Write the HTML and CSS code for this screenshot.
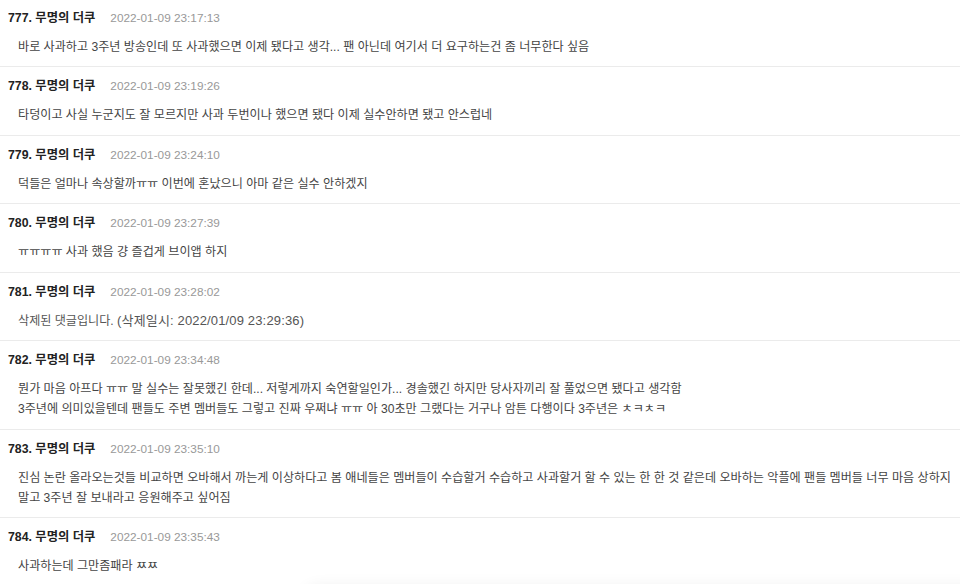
FILE: index.html
```html
<!DOCTYPE html>
<html lang="ko">
<head>
<meta charset="utf-8">
<link rel="stylesheet" href="styles.css">
</head>
<body>
<ul class="comments">
  <li class="comment">
    <div class="meta"><span class="author">777. 무명의 더쿠</span><span class="date">2022-01-09 23:17:13</span></div>
    <div class="text">바로 사과하고 3주년 방송인데 또 사과했으면 이제 됐다고 생각... 팬 아닌데 여기서 더 요구하는건 좀 너무한다 싶음</div>
  </li>
  <li class="comment">
    <div class="meta"><span class="author">778. 무명의 더쿠</span><span class="date">2022-01-09 23:19:26</span></div>
    <div class="text">타덩이고 사실 누군지도 잘 모르지만 사과 두번이나 했으면 됐다 이제 실수안하면 됐고 안스럽네</div>
  </li>
  <li class="comment">
    <div class="meta"><span class="author">779. 무명의 더쿠</span><span class="date">2022-01-09 23:24:10</span></div>
    <div class="text">덕들은 얼마나 속상할까ㅠㅠ 이번에 혼났으니 아마 같은 실수 안하겠지</div>
  </li>
  <li class="comment">
    <div class="meta"><span class="author">780. 무명의 더쿠</span><span class="date">2022-01-09 23:27:39</span></div>
    <div class="text">ㅠㅠㅠㅠ 사과 했음 걍 즐겁게 브이앱 하지</div>
  </li>
  <li class="comment">
    <div class="meta"><span class="author">781. 무명의 더쿠</span><span class="date">2022-01-09 23:28:02</span></div>
    <div class="text deleted">삭제된 댓글입니다. <span class="del-time">(삭제일시: 2022/01/09 23:29:36)</span></div>
  </li>
  <li class="comment">
    <div class="meta"><span class="author">782. 무명의 더쿠</span><span class="date">2022-01-09 23:34:48</span></div>
    <div class="text">뭔가 마음 아프다 ㅠㅠ 말 실수는 잘못했긴 한데... 저렇게까지 숙연할일인가... 경솔했긴 하지만 당사자끼리 잘 풀었으면 됐다고 생각함<br>3주년에 의미있을텐데 팬들도 주변 멤버들도 그렇고 진짜 우쩌냐 ㅠㅠ 아 30초만 그랬다는 거구나 암튼 다행이다 3주년은 ㅊㅋㅊㅋ</div>
  </li>
  <li class="comment">
    <div class="meta"><span class="author">783. 무명의 더쿠</span><span class="date">2022-01-09 23:35:10</span></div>
    <div class="text">진심 논란 올라오는것들 비교하면 오바해서 까는게 이상하다고 봄 애네들은 멤버들이 수습할거 수습하고 사과할거 할 수 있는 한 한 것 같은데 오바하는 악플에 팬들 멤버들 너무 마음 상하지<br>말고 3주년 잘 보내라고 응원해주고 싶어짐</div>
  </li>
  <li class="comment">
    <div class="meta"><span class="author">784. 무명의 더쿠</span><span class="date">2022-01-09 23:35:43</span></div>
    <div class="text">사과하는데 그만좀패라 ㅉㅉ</div>
  </li>
</ul>
<div class="float-shadow"></div>
</body>
</html>
```
FILE: styles.css
```css
html, body {
  margin: 0;
  padding: 0;
  background: #ffffff;
}
body {
  font-family: "Liberation Sans", "Noto Sans CJK KR", sans-serif;
  color: #333;
  overflow: hidden;
}
.comments {
  list-style: none;
  margin: 0;
  padding: 0;
}
.comment {
  padding: 10px 8px 9.5px 8px;
  border-bottom: 1px solid #ebebeb;
}
.comment:first-child {
  padding-top: 8.5px;
}
.meta {
  display: flex;
  align-items: baseline;
  line-height: 18px;
  height: 18px;
  white-space: nowrap;
}
.author {
  font-size: 12.3px;
  font-weight: bold;
  color: #222;
}
.date {
  margin-left: 15px;
  font-size: 11.8px;
  color: #999;
}
.text {
  margin-top: 10px;
  padding-left: 10px;
  font-size: 12.1px;
  line-height: 20px;
  color: #444;
  white-space: nowrap;
}
.text.deleted {
  color: #555;
}
.del-time {
  font-size: 13px;
  letter-spacing: 0.15px;
}
.float-shadow {
  position: fixed;
  left: 300px;
  right: -20px;
  bottom: -30px;
  height: 30px;
  border-radius: 20px 0 0 0;
  box-shadow: 0 0 14px rgba(0, 0, 0, 0.05);
  background: #fff;
}
```
